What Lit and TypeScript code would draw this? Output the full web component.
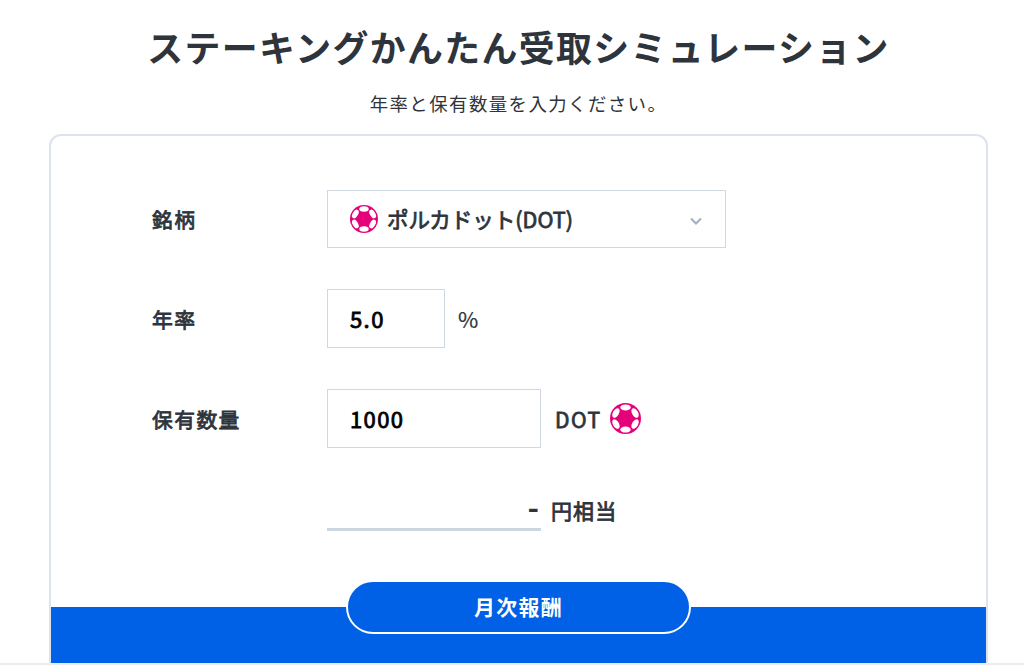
import { LitElement, html, css } from 'lit';
import { customElement, property, state } from 'lit/decorators.js';

@customElement('dot-icon')
export class DotIcon extends LitElement {
  static styles = css`
    :host {
      display: block;
      flex: none;
    }
    svg {
      display: block;
      width: 100%;
      height: 100%;
    }
  `;

  render() {
    return html`
      <svg viewBox="0 0 32 32" aria-hidden="true">
        <circle cx="16" cy="16" r="16" fill="#e6007a" />
        <g fill="#fff">
          <ellipse cx="16" cy="4.6" rx="5.4" ry="3.1" />
          <ellipse cx="16" cy="27.4" rx="5.4" ry="3.1" />
          <ellipse cx="16" cy="4.6" rx="5.4" ry="3.1" transform="rotate(60 16 16)" />
          <ellipse cx="16" cy="4.6" rx="5.4" ry="3.1" transform="rotate(120 16 16)" />
          <ellipse cx="16" cy="4.6" rx="5.4" ry="3.1" transform="rotate(240 16 16)" />
          <ellipse cx="16" cy="4.6" rx="5.4" ry="3.1" transform="rotate(300 16 16)" />
        </g>
      </svg>
    `;
  }
}

@customElement('form-row')
export class FormRow extends LitElement {
  @property() label = '';

  static styles = css`
    :host {
      display: flex;
      align-items: center;
      height: 59px;
    }
    .label {
      width: 175px;
      font-size: 20.8px;
      letter-spacing: 1.4px;
      -webkit-text-stroke: 0.8px;
    }
  `;

  render() {
    return html`
      <div class="label">${this.label}</div>
      <slot></slot>
    `;
  }
}

@customElement('app-root')
export class AppRoot extends LitElement {
  @state() private rate = '5.0';
  @state() private amount = '1000';

  static styles = css`
    :host {
      display: flex;
      flex-direction: column;
      box-sizing: border-box;
      height: 672px;
      overflow: hidden;
      background: #fff;
      color: #2d343c;
      font-family: 'Noto Sans CJK JP', sans-serif;
    }
    .page {
      display: flex;
      flex-direction: column;
      box-sizing: border-box;
      height: 665px;
      padding: 18px 36px 0 49px;
      border-bottom: 2px solid #ececee;
    }
    h1 {
      margin: 0;
      height: 56px;
      line-height: 56px;
      font-size: 35.9px;
      font-weight: 700;
      letter-spacing: 1.35px;
      text-align: center;
      white-space: nowrap;
    }
    .lead {
      margin: 14px 0 0;
      height: 46px;
      line-height: 30px;
      font-size: 18.4px;
      letter-spacing: 1.45px;
      text-align: center;
    }
    .card {
      display: flex;
      flex: 1;
      flex-direction: column;
      border: 2px solid #dce2ee;
      border-bottom: 0;
      border-radius: 12px 12px 0 0;
    }
    .form {
      display: flex;
      flex: 1;
      flex-direction: column;
      gap: 41px;
      padding: 53px 0 0 101px;
    }
    .box {
      box-sizing: border-box;
      height: 59px;
      padding: 0 22px;
      border: 1px solid #d0d9e1;
      border-radius: 0;
      background: #fff;
    }
    .select {
      display: flex;
      align-items: center;
      width: 399px;
      height: 58px;
      margin-top: 1px;
      font-size: 21.5px;
      -webkit-text-stroke: 0.8px;
    }
    .select span {
      margin-top: -2px;
    }
    .select dot-icon {
      width: 28px;
      height: 28px;
      margin-right: 9px;
    }
    .chevron {
      width: 12px;
      height: 8px;
      margin: 4px 1px 0 auto;
    }
    input {
      color: #000;
      font-family: inherit;
      font-size: 22px;
      letter-spacing: 1.4px;
      -webkit-text-stroke: 0.8px;
      outline: none;
    }
    input.box {
      padding-bottom: 2px;
    }
    .rate {
      width: 118px;
    }
    .amount {
      width: 214px;
    }
    .unit {
      margin-left: 14px;
      font-size: 21px;
      letter-spacing: 1.5px;
      -webkit-text-stroke: 0.8px;
    }
    .percent {
      margin: -1px 0 0 13px;
      font-size: 22px;
      -webkit-text-stroke: 0.2px;
    }
    .unit-icon {
      width: 31px;
      height: 31px;
      margin-left: 8px;
    }
    .result {
      margin-top: -17px;
    }
    .value {
      box-sizing: border-box;
      width: 214px;
      height: 59px;
      line-height: 68px;
      border-bottom: 3px solid #ccd6e0;
      font-size: 31px;
      font-weight: 700;
      letter-spacing: 2px;
      text-align: right;
    }
    .yen {
      margin: 16px 0 0 10px;
      letter-spacing: 1.1px;
    }
    .panel {
      display: flex;
      justify-content: center;
      height: 56px;
      background: #0060e6;
    }
    .badge {
      box-sizing: border-box;
      width: 345px;
      height: 54px;
      margin-top: -27px;
      border: 2px solid #fff;
      border-radius: 27px;
      background: #0060e6;
      color: #fff;
      font-size: 20.9px;
      font-weight: 700;
      letter-spacing: 1.3px;
      line-height: 49px;
      text-align: center;
    }
  `;

  private _onRate(e: Event) {
    this.rate = (e.target as HTMLInputElement).value;
  }

  private _onAmount(e: Event) {
    this.amount = (e.target as HTMLInputElement).value;
  }

  render() {
    return html`
      <div class="page">
        <h1>ステーキングかんたん受取シミュレーション</h1>
        <p class="lead">年率と保有数量を入力ください。</p>
        <div class="card">
          <div class="form">
            <form-row label="銘柄">
              <div class="box select">
                <dot-icon></dot-icon>
                <span>ポルカドット(DOT)</span>
                <svg class="chevron" viewBox="0 0 12 8" fill="none">
                  <path d="M1 1.5 6 6.5l5-5" stroke="#9fafc0" stroke-width="2" />
                </svg>
              </div>
            </form-row>
            <form-row label="年率">
              <input class="box rate" .value=${this.rate} @input=${this._onRate} />
              <span class="unit percent">%</span>
            </form-row>
            <form-row label="保有数量">
              <input class="box amount" .value=${this.amount} @input=${this._onAmount} />
              <span class="unit">DOT</span>
              <dot-icon class="unit-icon"></dot-icon>
            </form-row>
            <form-row class="result">
              <div class="value">-</div>
              <span class="unit yen">円相当</span>
            </form-row>
          </div>
          <div class="panel">
            <div class="badge">月次報酬</div>
          </div>
        </div>
      </div>
    `;
  }
}
